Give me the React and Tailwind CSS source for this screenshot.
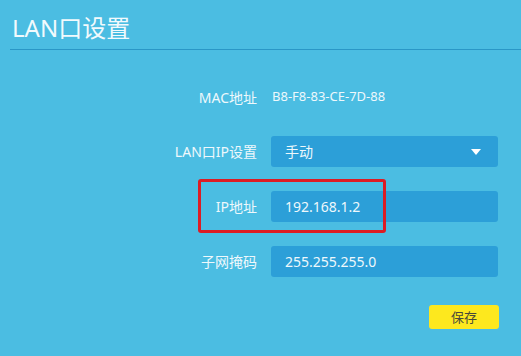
export default function App() {
  const font = { fontFamily: '"Noto Sans", "Noto Sans CJK SC", sans-serif' }
  return (
    <div className="w-[521px] h-[356px] bg-[#4bbde2] overflow-hidden text-[#eef8fc]" style={font}>
      <div className="pl-[10px]">
        <h1 className="pl-[2px] pt-[12px] h-[50px] text-[24px] leading-[32px] text-[#f2fafd] border-b border-[#2a97c6]">
          LAN口设置
        </h1>
      </div>

      <div className="flex flex-col">
        <div className="flex items-center mt-[36px] h-[22px]">
          <span className="w-[257px] text-right text-[14px]">MAC地址</span>
          <span className="ml-[15px] text-[13px]">B8-F8-83-CE-7D-88</span>
        </div>

        <div className="flex items-center mt-[28px]">
          <span className="w-[257px] text-right text-[14px]">LAN口IP设置</span>
          <div className="ml-[14px] w-[227px] h-[31px] bg-[#2c9fd8] rounded-[3px] flex items-center justify-between pl-[14px] pr-[17px] text-[14px]">
            <span>手动</span>
            <svg width="10" height="6" viewBox="0 0 10 6">
              <path d="M0 0 L10 0 L5 6 Z" fill="#ffffff" />
            </svg>
          </div>
        </div>

        <div className="relative flex items-center mt-[24px]">
          <span className="w-[257px] text-right text-[14px]">IP地址</span>
          <div className="ml-[14px] w-[227px] h-[31px] bg-[#2c9fd8] rounded-[3px] flex items-center pl-[14px] text-[14px]">
            192.168.1.2
          </div>
          <div className="absolute left-[198px] top-[-12px] w-[188px] h-[54px] border-[3px] border-[#dc1c24] rounded-[3px]" />
        </div>

        <div className="flex items-center mt-[24px]">
          <span className="w-[257px] text-right text-[14px]">子网掩码</span>
          <div className="ml-[14px] w-[227px] h-[31px] bg-[#2c9fd8] rounded-[3px] flex items-center pl-[14px] text-[14px]">
            255.255.255.0
          </div>
        </div>

        <div className="flex justify-end pr-[22px] mt-[28px]">
          <button className="w-[70px] h-[24px] bg-[#fde81e] rounded-[3px] text-[13px] text-[#4a4a3a] leading-[24px]">
            保存
          </button>
        </div>
      </div>
    </div>
  )
}
